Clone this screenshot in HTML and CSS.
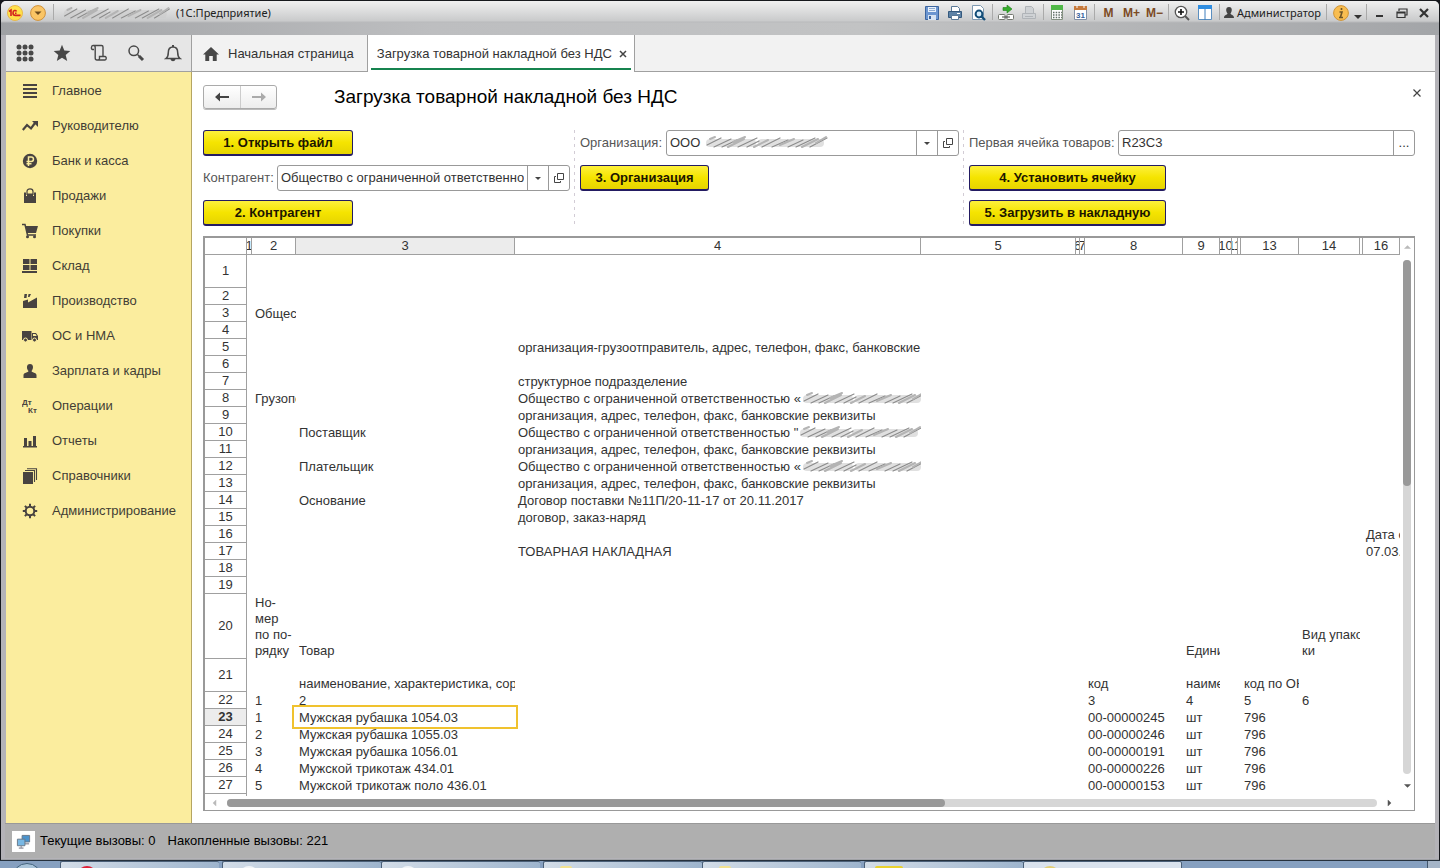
FILE: index.html
```html
<!DOCTYPE html>
<html lang="ru">
<head>
<meta charset="utf-8">
<title>Загрузка товарной накладной без НДС</title>
<link rel="stylesheet" href="styles.css">
</head>
<body>
<svg class="defs" aria-hidden="true">
  <defs>
    <filter id="soft" x="-5%" y="-20%" width="110%" height="140%"><feGaussianBlur stdDeviation="0.7"/></filter>
    <symbol id="smudge" viewBox="0 0 126 14" preserveAspectRatio="none">
      <g filter="url(#soft)" fill="none" stroke-linecap="round">
        <path d="M6 8H48M58 8H116" stroke="#ccc" stroke-width="8" opacity=".6"/>
        <path d="M3 10l14-7M10 12l17-8M18 12l15-7M34 12l19-9M43 12l12-6M58 12l18-9M68 12l16-7M84 12l15-7M92 12l19-9M106 12l17-9" stroke="#8c8c8c" stroke-width="1.200"/>
        <path d="M6 4l5-2M24 12l16-8M29 7l12-5M50 12l14-7M76 10l14-6M98 12l16-8M112 8l10-6" stroke="#b4b4b4" stroke-width="2"/>
      </g>
    </symbol>
    <symbol id="open" viewBox="0 0 10 10"><path d="M3.500.500h6v6h-6zM2 3.500H.500v6h6V8" fill="none" stroke="#444"/></symbol>
    <symbol id="dir" viewBox="0 0 8 6"><path d="M0 1h8L4 5z"/></symbol>
  </defs>
</svg>

<div class="window">
  <header class="titlebar">
    <svg class="logo" viewBox="0 0 16 16"><circle cx="8" cy="8" r="7.500" fill="#ffe14a" stroke="#e8b84a"/><path d="M2 6.500l2-1.500v6M9.500 6.500c-.7-1.500-3.500-1.500-3.500 1.500 0 2 1.200 2.400 2.500 2.400H13.500M9.500 8.300H8" fill="none" stroke="#d3221e" stroke-width="1.600"/></svg>
    <button class="round" aria-label="Меню"><svg viewBox="0 0 16 16"><circle cx="8" cy="8" r="7.400" fill="#fac565" stroke="#d0913a"/><path d="M4.500 6.500h7L8 10z" fill="#6b4a1c"/></svg></button>
    <i class="sep"></i>
    <svg class="smudge smudge-title"><use href="#smudge"/></svg>
    <span class="app">(1С:Предприятие)</span>
    <div class="tools">
      <button aria-label="Сохранить"><svg viewBox="0 0 16 16"><path d="M1.500 1.500h13v13h-13z" fill="#6b95d0" stroke="#3c659f"/><path d="M4 2h8v5H4z" fill="#e9f1fb"/><path d="M5 3.500h6M5 5.500h6" stroke="#8daad0"/><path d="M4 10h8v5H4z" fill="#d7e3f2"/><path d="M5 11h2v3H5z" fill="#3c659f"/></svg></button>
      <button aria-label="Печать"><svg viewBox="0 0 16 16"><path d="M4.500 1.500h6l2 2v4h-8z" fill="#fff" stroke="#5a7997"/><path d="M1.500 6.500h13v6h-13z" fill="#5d82a6" stroke="#35597d"/><path d="M4.500 10.500h7v4h-7z" fill="#fff" stroke="#5a7997"/><path d="M10 8.500h3" stroke="#fff"/></svg></button>
      <button aria-label="Просмотр"><svg viewBox="0 0 16 16"><path d="M2.500.500h8l3 3v11h-11z" fill="#fff" stroke="#7f9ab2"/><circle cx="9" cy="9" r="3.400" fill="#d9eefb" stroke="#144e78" stroke-width="2"/><path d="M11.500 11.500l3.500 3.500" stroke="#144e78" stroke-width="2.400"/></svg></button>
      <i class="sep"></i>
      <button aria-label="Получить ссылку"><svg viewBox="0 0 16 16"><path d="M5 2.500h4V0l5 4-5 4V5.500H5z" fill="#35ad2c" stroke="#1f7d1a" stroke-width=".6"/><rect x=".500" y="9.500" width="6.500" height="5" rx="1" fill="#fff" stroke="#73776f"/><rect x="9" y="9.500" width="6.500" height="5" rx="1" fill="#fff" stroke="#73776f"/><path d="M4 12h8" stroke="#444"/></svg></button>
      <button aria-label="Перейти по ссылке" disabled><svg viewBox="0 0 16 16"><path d="M4.500 1.500h6l2 2v5h-8zM1.500 8.500h13v5h-13z" fill="#cfd2d5" stroke="#b0b4b8"/><path d="M4 11.500h8" stroke="#b0b4b8"/></svg></button>
      <i class="sep"></i>
      <button aria-label="Калькулятор"><svg viewBox="0 0 16 16"><path d="M2.500.500h11v14h-11z" fill="#fff" stroke="#849181"/><path d="M2 0h12v5H2z" fill="#50b848"/><path d="M4 7.500h9M4 10h9M4 12.500h9" stroke="#5f6d66" stroke-width="1.300" stroke-dasharray="1.500 1.200"/></svg></button>
      <button aria-label="Календарь"><svg viewBox="0 0 16 16"><path d="M2.500 2.500h12v12h-12z" fill="#fff" stroke="#8290a5"/><path d="M2 1h13v4H2z" fill="#c77a3c"/><path d="M5 0v3M12 0v3" stroke="#fff"/><text x="4" y="13" class="cal">31</text></svg></button>
      <i class="sep"></i>
      <button class="mem">M</button><button class="mem">M+</button><button class="mem">M−</button>
      <i class="sep"></i>
      <button aria-label="Масштаб"><svg viewBox="0 0 16 16"><circle cx="7" cy="7" r="5.700" fill="#fff" stroke="#555" stroke-width="1.300"/><path d="M4 7h6M7 4v6" stroke="#111" stroke-width="1.600"/><path d="M11 11l4 4" stroke="#555" stroke-width="2"/></svg></button>
      <button aria-label="Панели"><svg viewBox="0 0 16 16"><path d="M1.500.500h13v14H1.500z" fill="#fff" stroke="#5b8fc0"/><path d="M1 0h14v4H1z" fill="#2f8de0"/><path d="M8 4v11" stroke="#3f7fbd"/></svg></button>
      <i class="sep"></i>
      <button class="user"><svg viewBox="0 0 10 12"><path d="M5 0c4 0 3 5 1.500 6.500 0 1.500 3.500 1 3.500 4.500H0C0 7.500 3.500 8 3.500 6.500 2 5 1 0 5 0z" fill="#444"/></svg>Администратор</button>
      <i class="sep"></i>
      <button aria-label="О программе"><svg viewBox="0 0 16 16"><circle cx="8" cy="8" r="7.400" fill="#f8bd50" stroke="#cf9437"/><path d="M8.500 3v2M6.500 7H9l-1.500 5M6 12.500h4" stroke="#6e5526" stroke-width="1.600" fill="none"/></svg></button>
      <button class="more" aria-label="Ещё"><svg viewBox="0 0 8 6"><use href="#dir"/></svg></button>
      <i class="sep"></i>
      <button class="win" aria-label="Свернуть"><svg viewBox="0 0 12 12"><path d="M2 9h7" stroke="#333" stroke-width="2"/></svg></button>
      <button class="win" aria-label="Восстановить"><svg viewBox="0 0 12 12"><path d="M3 4V2h8v6H9M1 5h8v5.500H1zM1 6h8" stroke="#333" stroke-width="1.200" fill="none"/></svg></button>
      <button class="win" aria-label="Закрыть окно"><svg viewBox="0 0 12 12"><path d="M2 2l8 8M10 2l-8 8" stroke="#333" stroke-width="2.200"/></svg></button>
    </div>
  </header>

  <div class="topbar">
    <div class="quick">
      <button aria-label="Разделы"><svg viewBox="0 0 18 18" fill="#484848"><g id="dots"><circle cx="3" cy="3" r="2.500"/><circle cx="9" cy="3" r="2.500"/><circle cx="15" cy="3" r="2.500"/></g><use href="#dots" y="6"/><use href="#dots" y="12"/></svg></button>
      <button aria-label="Избранное"><svg viewBox="0 0 18 18"><path d="M9 .800l2.300 5.700 6 .5-4.600 3.900 1.500 6L9 13.700l-5.200 3.200 1.500-6L.700 7l6-.5z" fill="#484848"/></svg></button>
      <button aria-label="История"><svg viewBox="0 0 18 18"><path d="M4 5.500H2.500c-1.500 0-1.500-4 .5-4h8.500c1 0 1.500.6 1.500 1.500v9.500M3.500 1.500c1.300 0 1.700 1 1.700 2v10.500c0 1.500.8 2 1.800 2h8c1.600 0 1.700-3.500 0-3.500H9.500v2c0 1-.6 1.500-1.500 1.500" fill="none" stroke="#484848" stroke-width="1.400"/></svg></button>
      <button aria-label="Поиск"><svg viewBox="0 0 18 18" fill="none" stroke="#484848"><circle cx="6.800" cy="6.800" r="4.800" stroke-width="1.500"/><path d="M10.500 10.500l2 2" stroke-width="1.500"/><path d="M12 12l4 4" stroke-width="3"/></svg></button>
      <button aria-label="Оповещения"><svg viewBox="0 0 18 18"><path d="M2 14.500c2-1.500 2.300-3 2.300-6C4.300 5 6 3 9 3s4.700 2 4.700 5.500c0 3 .3 4.500 2.300 6z" fill="none" stroke="#484848" stroke-width="1.500"/><path d="M8 1h2v2H8zM6.500 15h5c-.5 3-4.500 3-5 0z" fill="#484848"/></svg></button>
    </div>
    <nav class="tabs">
      <a class="tab" href="#"><svg class="home" viewBox="0 0 16 14"><path d="M8 0l8 7.500h-2.300V14H9.800V9H6.200v5H2.300V7.500H0z" fill="#484848"/></svg>Начальная страница</a>
      <a class="tab tab-on" href="#">Загрузка товарной накладной без НДС<svg class="x" viewBox="0 0 8 8"><path d="M1 1l6 6M7 1L1 7" stroke="#444" stroke-width="1.500"/></svg></a>
    </nav>
  </div>

  <div class="body">
    <nav class="side">
      <a href="#"><svg viewBox="0 0 16 16"><path d="M1 2h14M1 6h14M1 10h14M1 14h14" stroke="#484340" stroke-width="2"/></svg>Главное</a>
      <a href="#"><svg viewBox="0 0 16 16"><path d="M.800 12L5 7l4 3.500 4-5.500" fill="none" stroke="#484340" stroke-width="2.200"/><path d="M10 3h6v6z" fill="#484340"/></svg>Руководителю</a>
      <a href="#"><svg viewBox="0 0 16 16"><circle cx="8" cy="8" r="7.200" fill="#484340"/><path d="M6.500 13V4h2.700c3 0 3 4.400 0 4.400H4.500M4.500 10.800h5" fill="none" stroke="#fbed9e" stroke-width="1.500"/></svg>Банк и касса</a>
      <a href="#"><svg viewBox="0 0 16 16"><path d="M2 4.500h2V8h1V5.500h6V8h1V4.500h2V15H2z" fill="#484340"/><path d="M5 7V3.500c0-3.600 6-3.600 6 0V7" fill="none" stroke="#484340" stroke-width="1.200"/></svg>Продажи</a>
      <a href="#"><svg viewBox="0 0 16 16"><path d="M3.500 3H16l-2 7H5z" fill="#484340"/><path d="M0 1.500h3L5.500 12H14" fill="none" stroke="#484340" stroke-width="1.500"/><circle cx="5.500" cy="13.700" r="1.500" fill="#484340"/><circle cx="12.500" cy="13.700" r="1.500" fill="#484340"/></svg>Покупки</a>
      <a href="#"><svg viewBox="0 0 16 16"><path d="M1 1h6.500v5H1zM8.500 1H15v5H8.500zM1 7h6.500v5H1zM8.500 7H15v5H8.500zM0 13h15v2H0z" fill="#484340"/></svg>Склад</a>
      <a href="#"><svg viewBox="0 0 16 16"><path d="M1 8l5-1.500V9.500l9-5V15H1zM2.500 1h2.500L4.500 5H2zM6.500 1H9L7.500 4H6z" fill="#484340"/></svg>Производство</a>
      <a href="#"><svg viewBox="0 0 16 16"><path d="M0 3h9.500v9H0zM10 5h4l2 3v4h-6z" fill="#484340"/><path d="M11 6h2.500l1.200 2H11z" fill="#fbed9e"/><circle cx="3.500" cy="12" r="2" fill="#484340" stroke="#fbed9e"/><circle cx="12.500" cy="12" r="2" fill="#484340" stroke="#fbed9e"/></svg>ОС и НМА</a>
      <a href="#"><svg viewBox="0 0 16 16"><path d="M8 1c4 0 3.500 5 1.500 7 0 1.500 5 1.500 5 4v3h-13v-3c0-2.500 5-2.500 5-4C4.500 6 4 1 8 1z" fill="#484340"/></svg>Зарплата и кадры</a>
      <a href="#"><svg class="dtkt" viewBox="0 0 16 16"><text x="0" y="7">Дт</text><text x="6" y="15">Кт</text></svg>Операции</a>
      <a href="#"><svg viewBox="0 0 16 16"><path d="M1 13h14v1.500H1zM2 5h3v8H2zM6.500 8h3v5h-3zM11 3h3v10h-3z" fill="#484340"/></svg>Отчеты</a>
      <a href="#"><svg viewBox="0 0 16 16"><path d="M1 4h10v12H1z" fill="#484340"/><path d="M3 2.500h9.500V14M5 .700h9.500V12" fill="none" stroke="#484340" stroke-width="1.100"/></svg>Справочники</a>
      <a href="#"><svg viewBox="0 0 16 16" fill="none" stroke="#484340"><circle cx="8" cy="8" r="4.300" stroke-width="2"/><path d="M8 .800v3M8 12.200v3M.800 8h3M12.200 8h3M2.900 2.900L5 5M11 11l2.100 2.100M2.900 13.100L5 11M11 5l2.100-2.100" stroke-width="2"/></svg>Администрирование</a>
    </nav>

    <main class="main">
      <div class="head">
        <div class="nav">
          <button aria-label="Назад"><svg viewBox="0 0 14 10"><path d="M0 5l5-4.500V4h9v2H5v3.500z" fill="#444"/></svg></button>
          <button aria-label="Вперед"><svg viewBox="0 0 14 10"><path d="M14 5L9 .500V4H0v2h9v3.500z" fill="#aaa"/></svg></button>
        </div>
        <h1>Загрузка товарной накладной без НДС</h1>
        <button class="close" aria-label="Закрыть"><svg viewBox="0 0 8 8"><path d="M.500.500l7 7M7.500.500l-7 7" stroke="#444" stroke-width="1.200"/></svg></button>
      </div>

      <form class="form">
        <div class="group">
          <button type="button" class="act act-m">1. Открыть файл</button>
          <div class="row">
            <label class="lab-s" for="contr">Контрагент:</label>
            <div class="field"><input id="contr" value="Общество с ограниченной ответственностью"><button type="button" aria-label="Выбрать"><svg class="dir" viewBox="0 0 8 6"><use href="#dir"/></svg></button><button type="button" aria-label="Открыть"><svg class="open"><use href="#open"/></svg></button></div>
          </div>
          <button type="button" class="act act-m">2. Контрагент</button>
        </div>
        <i class="dash"></i>
        <div class="group">
          <div class="row">
            <label class="lab-m" for="org">Организация:</label>
            <div class="field"><input id="org" value="ООО"><svg class="smudge smudge-field"><use href="#smudge"/></svg><button type="button" aria-label="Выбрать"><svg class="dir" viewBox="0 0 8 6"><use href="#dir"/></svg></button><button type="button" aria-label="Открыть"><svg class="open"><use href="#open"/></svg></button></div>
          </div>
          <button type="button" class="act act-s">3. Организация</button>
        </div>
        <i class="dash"></i>
        <div class="group">
          <div class="row">
            <label class="lab-l" for="cell">Первая ячейка товаров:</label>
            <div class="field"><input id="cell" value="R23C3"><button type="button">...</button></div>
          </div>
          <button type="button" class="act act-l">4. Установить ячейку</button>
          <button type="button" class="act act-l">5. Загрузить в накладную</button>
        </div>
      </form>

      <section class="sheet">
        <div class="view">
          <table>
            <colgroup><col class="c0"><col class="c1"><col class="c2"><col class="c3"><col class="c4"><col><col class="c6"><col class="c7"><col class="c8"><col class="c9"><col class="c10"><col class="c11"><col class="c12"><col class="c13"><col class="c14"><col class="c15"><col class="c16"></colgroup>
            <thead><tr><th></th><th class="slim"><span>1</span></th><th>2</th><th class="cur">3</th><th>4</th><th>5</th><th class="slim"><span>6</span></th><th class="slim"><span>7</span></th><th>8</th><th>9</th><th class="slim"><span>10</span></th><th class="slim"><span>11</span></th><th></th><th>13</th><th>14</th><th></th><th>16</th></tr></thead>
            <tbody>
              <tr class="tall"><th>1</th><td colspan="16"></td></tr>
              <tr><th>2</th><td colspan="16"></td></tr>
              <tr><th>3</th><td></td><td>Общество</td><td colspan="14"></td></tr>
              <tr><th>4</th><td colspan="16"></td></tr>
              <tr><th>5</th><td colspan="3"></td><td>организация-грузоотправитель, адрес, телефон, факс, банковские реквизиты</td><td colspan="12"></td></tr>
              <tr><th>6</th><td colspan="16"></td></tr>
              <tr><th>7</th><td colspan="3"></td><td>структурное подразделение</td><td colspan="12"></td></tr>
              <tr><th>8</th><td></td><td>Грузополучатель</td><td></td><td>Общество с ограниченной ответственностью «<svg class="smudge"><use href="#smudge"/></svg></td><td colspan="12"></td></tr>
              <tr><th>9</th><td colspan="3"></td><td>организация, адрес, телефон, факс, банковские реквизиты</td><td colspan="12"></td></tr>
              <tr><th>10</th><td colspan="2"></td><td>Поставщик</td><td>Общество с ограниченной ответственностью "<svg class="smudge"><use href="#smudge"/></svg></td><td colspan="12"></td></tr>
              <tr><th>11</th><td colspan="3"></td><td>организация, адрес, телефон, факс, банковские реквизиты</td><td colspan="12"></td></tr>
              <tr><th>12</th><td colspan="2"></td><td>Плательщик</td><td>Общество с ограниченной ответственностью «<svg class="smudge"><use href="#smudge"/></svg></td><td colspan="12"></td></tr>
              <tr><th>13</th><td colspan="3"></td><td>организация, адрес, телефон, факс, банковские реквизиты</td><td colspan="12"></td></tr>
              <tr><th>14</th><td colspan="2"></td><td>Основание</td><td>Договор поставки №11П/20-11-17 от 20.11.2017</td><td colspan="12"></td></tr>
              <tr><th>15</th><td colspan="3"></td><td>договор, заказ-наряд</td><td colspan="12"></td></tr>
              <tr><th>16</th><td colspan="15"></td><td>Дата составления</td></tr>
              <tr><th>17</th><td colspan="3"></td><td>ТОВАРНАЯ НАКЛАДНАЯ</td><td colspan="11"></td><td>07.03.2018</td></tr>
              <tr><th>18</th><td colspan="16"></td></tr>
              <tr><th>19</th><td colspan="16"></td></tr>
              <tr class="huge"><th>20</th><td></td><td>Но-<br>мер<br>по по-<br>рядку</td><td>Товар</td><td colspan="5"></td><td>Единица</td><td colspan="4"></td><td>Вид упаков-<br>ки</td><td colspan="2"></td></tr>
              <tr class="tall"><th>21</th><td colspan="2"></td><td>наименование, характеристика, сорт</td><td colspan="4"></td><td>код</td><td>наименование</td><td colspan="3"></td><td>код по ОКЕИ</td><td colspan="3"></td></tr>
              <tr><th>22</th><td></td><td>1</td><td>2</td><td colspan="4"></td><td>3</td><td>4</td><td colspan="3"></td><td>5</td><td>6</td><td colspan="2"></td></tr>
              <tr><th class="cur">23</th><td></td><td>1</td><td class="picked">Мужская рубашка 1054.03</td><td colspan="4"></td><td>00-00000245</td><td>шт</td><td colspan="3"></td><td>796</td><td colspan="3"></td></tr>
              <tr><th>24</th><td></td><td>2</td><td>Мужская рубашка 1055.03</td><td colspan="4"></td><td>00-00000246</td><td>шт</td><td colspan="3"></td><td>796</td><td colspan="3"></td></tr>
              <tr><th>25</th><td></td><td>3</td><td>Мужская рубашка 1056.01</td><td colspan="4"></td><td>00-00000191</td><td>шт</td><td colspan="3"></td><td>796</td><td colspan="3"></td></tr>
              <tr><th>26</th><td></td><td>4</td><td>Мужской трикотаж 434.01</td><td colspan="4"></td><td>00-00000226</td><td>шт</td><td colspan="3"></td><td>796</td><td colspan="3"></td></tr>
              <tr><th>27</th><td></td><td>5</td><td>Мужской трикотаж поло 436.01</td><td colspan="4"></td><td>00-00000153</td><td>шт</td><td colspan="3"></td><td>796</td><td colspan="3"></td></tr>
              <tr><th></th><td colspan="16"></td></tr>
            </tbody>
          </table>
        </div>
        <div class="vbar"><svg class="up" viewBox="0 0 8 6"><use href="#dir"/></svg><div class="track"><div class="thumb"></div></div><svg class="down" viewBox="0 0 8 6"><use href="#dir"/></svg></div>
        <div class="hbar"><svg class="left" viewBox="0 0 8 6"><use href="#dir"/></svg><div class="track"><div class="thumb"></div></div><svg class="right" viewBox="0 0 8 6"><use href="#dir"/></svg></div>
      </section>
    </main>
  </div>

  <footer class="status">
    <span class="net"><svg viewBox="0 0 16 16"><path d="M6.500 1.500h8v7h-8z" fill="#4b93cc" stroke="#678"/><path d="M9 10.500h5" stroke="#667"/><path d="M1.500 5.500h8v7h-8z" fill="#79b8e4" stroke="#678"/><path d="M5.500 13v1.500M3 15h5" stroke="#667"/></svg></span>
    <span>Текущие вызовы: 0</span><span>Накопленные вызовы: 221</span>
  </footer>
</div>

<div class="taskbar">
  <span class="start"><i></i></span>
  <span class="stack"><span class="task"><i class="red"></i></span></span>
  <span class="stack"><span class="task"><i></i></span><span class="task"><i></i></span></span>
  <span class="stack"><span class="task"><i class="folder"></i></span><span class="task"><i class="folder"></i></span></span>
  <span class="stack"><span class="task"><i class="gold"></i></span><span class="task task-on"><i class="ring"></i></span></span>
  <span class="desk"></span>
</div>
</body>
</html>
```
FILE: styles.css
```css
* { box-sizing: border-box; }
body {
  margin: 0;
  height: 100vh;
  display: flex;
  flex-direction: column;
  background: #16181c;
  color: #333;
  font: 13px/16px "Liberation Sans", Arial, sans-serif;
  overflow: hidden;
}
button, input { font: inherit; color: inherit; }
button { padding: 0; border: 0; background: none; display: flex; align-items: center; justify-content: center; }
a { color: inherit; text-decoration: none; }
svg { display: block; flex: none; }
.defs { position: absolute; width: 0; height: 0; }
.smudge { width: 126px; height: 14px; }

.window {
  flex: 1;
  min-height: 0;
  display: flex;
  flex-direction: column;
  margin: 1px 1px 0 1px;
  padding: 0 4px 1px 4px;
  background: #b4b3b8;
  border-bottom: 1px solid #a0a2a5;
  border-radius: 5px 5px 0 0;
}

/* Title bar */
.titlebar {
  height: 34px;
  flex: none;
  display: flex;
  align-items: flex-start;
  margin: 0 -4px;
  padding: 0 4px;
  border-radius: 5px 5px 0 0;
  background: linear-gradient(#f0f0f0, #c9cacb 20px, #b9babc 21px, rgba(190, 191, 193, 0) 22px), linear-gradient(90deg, #9fa1a4, #bdbec0 30%, #c2c3c4 60%, #a3a5a8);
  font: 11px/24px "Noto Sans", "DejaVu Sans", sans-serif;
  color: #222;
}
.titlebar .logo, .round svg { width: 16px; height: 16px; }
.titlebar .logo { margin: 4px 7px 0 2px; }
.round { margin: 4px 5px 0 0; height: 16px; }
.sep { width: 1px; height: 16px; margin: 3px 2px 0; background: #aaa; flex: none; }
.smudge-title { width: 110px; margin: 5px 4px 0 6px; }
.tools { display: flex; margin-left: auto; }
.tools button { width: 23px; height: 24px; }
.tools svg { width: 16px; height: 16px; }
.cal { font: bold 8px "Liberation Sans", sans-serif; fill: #34619c; }
.tools .mem { font: bold 12px "Liberation Sans", sans-serif; color: #7c4a24; }
.tools .user { width: auto; gap: 3px; padding: 0 3px 0 2px; color: #222; }
.tools .user svg { width: 10px; height: 12px; }
.tools .more { width: 12px; }
.tools .more svg { width: 8px; height: 6px; margin-top: 8px; fill: #333; }
.tools .win { width: 22px; }
.tools .win svg { width: 12px; height: 12px; }

/* Section buttons and tabs */
.topbar { height: 37px; flex: none; display: flex; background: #f2f2f2; border-bottom: 1px solid #a0a0a0; margin-left: 1px; }
.quick { width: 186px; flex: none; display: flex; background: #e6e6e6; border-right: 1px solid #a0a0a0; }
.quick button { flex: 1; }
.quick svg { width: 18px; height: 18px; }
.tabs { display: flex; }
.tab { display: flex; align-items: center; gap: 9px; height: 36px; padding: 1px 13px 0 11px; border-right: 1px solid #a0a0a0; }
.tab-on { position: relative; height: 37px; gap: 7px; padding: 0 7px 0 9px; background: #fff; }
.tab-on::after { content: ""; position: absolute; left: 3px; right: 3px; bottom: 2px; height: 2px; background: #16834f; }
.home { width: 16px; height: 14px; }
.x { width: 8px; height: 8px; }

/* Sections */
.body { flex: 1; min-height: 0; display: flex; margin-left: 1px; }
.side { width: 186px; flex: none; padding-top: 1px; background: #fbed9e; border-right: 1px solid #b5a562; }
.side a { display: flex; align-items: center; height: 35px; padding-left: 16px; gap: 14px; color: #423d35; }
.side svg { width: 16px; height: 16px; }
.dtkt text { font: bold 8px "Liberation Sans", sans-serif; fill: #484340; }

/* Form */
.main { flex: 1; min-width: 0; display: flex; flex-direction: column; padding: 12px 20px 12px 11px; background: #fff; }
.head { display: flex; align-items: center; height: 26px; }
.nav { display: flex; border: 1px solid #aaa; border-radius: 3px; background: linear-gradient(#fff, #ededed); box-shadow: 0 1px 0 #bbb; }
.nav button { width: 36px; height: 22px; }
.nav button + button { border-left: 1px solid #ccc; }
.nav svg { width: 14px; height: 10px; }
h1 { margin: 0 0 0 57px; font: 19px/24px "Liberation Sans", Arial, sans-serif; color: #000; }
.close { margin: -8px -12px 0 auto; width: 20px; height: 20px; }
.close svg { width: 8px; height: 8px; }
.form { display: grid; grid-template-columns: 367fr 2px 379fr 2px 446fr; column-gap: 4px; margin-top: 20px; }
.group { display: flex; flex-direction: column; align-items: flex-start; gap: 9px; min-width: 0; }
.dash { width: 1px; background: repeating-linear-gradient(#d2ccd5 0 3px, transparent 3px 7px); }
.row { display: flex; align-items: center; width: 100%; color: #555; }
.lab-s { flex: 0 0 74px; }
.lab-m { flex: 0 0 86px; }
.lab-l { flex: 0 0 149px; }
.field { position: relative; flex: 1; min-width: 0; display: flex; height: 26px; border: 1px solid #999; border-radius: 3px; background: #fff; color: #333; }
.field input { flex: 1; width: 0; min-width: 0; border: 0; padding: 0 3px; background: none; outline: 0; }
.field button { width: 21px; border-left: 1px solid #999; }
.field .dir { width: 6px; height: 5px; fill: #444; }
.field .open { width: 10px; height: 10px; }
.smudge-field { position: absolute; left: 37px; top: 4px; }
.act { height: 26px; font-weight: bold; color: #1c1600; border: 1px solid #231b62; border-bottom-width: 2px; border-radius: 3px; background: linear-gradient(#fdf03c, #f5e400 50%, #e6d400); }
.act-s { width: 129px; }
.act-m { width: 150px; }
.act-l { width: 197px; }

/* Spreadsheet */
.sheet { flex: 1; min-height: 0; display: grid; grid-template: minmax(0, 1fr) 14px / minmax(0, 1fr) 14px; margin-top: 10px; border: 1px solid #999; border-top-width: 2px; border-left-width: 2px; }
.view { overflow: hidden; }
table { width: 100%; table-layout: fixed; border-collapse: separate; border-spacing: 0; }
.c0 { width: 42px; } .c1 { width: 5px; } .c2 { width: 44px; } .c3 { width: 219px; } .c4 { width: 406px; }
.c6 { width: 4px; } .c7 { width: 5px; } .c8 { width: 98px; } .c9 { width: 37px; } .c10 { width: 12px; }
.c11 { width: 6px; } .c12 { width: 3px; } .c13 { width: 58px; } .c14 { width: 61px; } .c15 { width: 3px; } .c16 { width: 37px; }
th, td { height: 17px; padding: 0; white-space: nowrap; overflow: hidden; }
th { font-weight: normal; border: solid #a0a0a0; border-width: 0 1px 1px 0; }
th.cur { background: #ececec; }
tbody th.cur { font-weight: bold; }
.slim span { display: block; margin: 0 -10px; }
td { padding: 0 0 0 3px; vertical-align: bottom; line-height: 16px; }
td:empty { padding: 0; }
td .smudge { display: inline-block; vertical-align: top; }
.tall > * { height: 33px; }
.huge > * { height: 65px; }
.picked { position: relative; overflow: visible; }
.picked::after { content: ""; position: absolute; inset: -4px -3px -3px -4px; border: 2px solid #f0c22e; }
.vbar { display: flex; flex-direction: column; align-items: center; }
.hbar { display: flex; align-items: center; }
.track { flex: 1; background: #d6d6d6; border-radius: 4px; }
.thumb { background: #999; border-radius: 4px; }
.vbar .track { width: 8px; }
.vbar .thumb { height: 44%; }
.hbar .track { height: 8px; }
.hbar .thumb { width: 62.4%; height: 8px; }
.vbar > svg, .hbar > svg { width: 7px; height: 6px; fill: #555; }
.up { transform: rotate(180deg); margin: 6px 0 10px; opacity: .4; }
.down { margin: 9px 0 7px; }
.left { transform: rotate(90deg); margin: 0 9px 0 6px; opacity: .4; }
.right { transform: rotate(-90deg); margin: 0 7px 0 9px; }

/* Status line */
.status { flex: none; display: flex; align-items: center; height: 35px; padding: 0 8px 0 7px; background: #afafaf; border-top: 1px solid #999; color: #000; }
.status span + span { margin-right: 12px; }
.net { width: 23px; height: 21px; margin-right: 5px; display: flex; align-items: center; justify-content: center; background: #fff; }
.net svg { width: 15px; height: 15px; }

/* Desktop taskbar */
.taskbar { flex: none; display: flex; gap: 3px; height: 8px; overflow: hidden; border-top: 1px solid #26313d; background: #86a0c0; }
.start { width: 57px; padding-left: 12px; }
.start i { display: block; width: 30px; height: 30px; margin-top: 2px; border-radius: 50%; border: 1px solid #42627c; background: #a9c4da; }
.stack { display: flex; }
.task { width: 159px; height: 20px; padding: 4px 0 0 16px; border: 1px solid #4b6078; border-right-width: 0; border-radius: 2px 2px 0 0; background: linear-gradient(100deg, #d3dde8, #9db4cd); }
.task-on { background: #d9e2ed; border-right-width: 1px; }
.task i { display: block; width: 20px; height: 20px; border-radius: 50%; background: #f2f5f8; }
.task .red { background: #df2037; }
.task .folder { border-radius: 2px; width: 12px; background: #f3e28f; }
.task .gold { border-radius: 2px; height: 6px; width: 28px; background: #ead22e; border-bottom: 2px solid #332e10; margin-left: -6px; }
.task .ring { border: 2px solid #e4cf75; }
.desk { width: 13px; margin-left: auto; border-left: 1px solid #42566c; background: #a5b5c8; }
```
